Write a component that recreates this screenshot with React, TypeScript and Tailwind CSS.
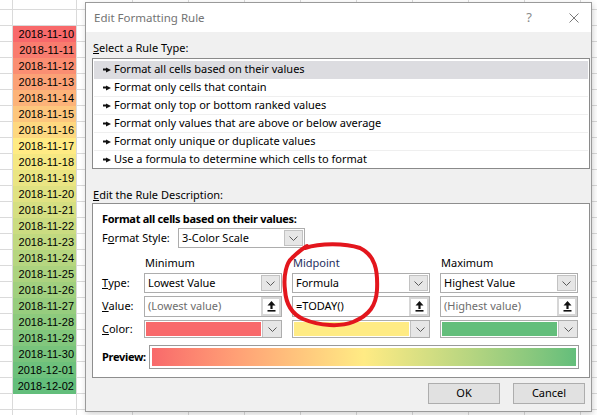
import React from 'react';

const DATES = [
  '2018-11-10', '2018-11-11', '2018-11-12', '2018-11-13', '2018-11-14', '2018-11-15',
  '2018-11-16', '2018-11-17', '2018-11-18', '2018-11-19', '2018-11-20', '2018-11-21',
  '2018-11-22', '2018-11-23', '2018-11-24', '2018-11-25', '2018-11-26', '2018-11-27',
  '2018-11-28', '2018-11-29', '2018-11-30', '2018-12-01', '2018-12-02',
];

const RED = [248, 105, 107];
const YELLOW = [255, 235, 132];
const GREEN = [99, 190, 123];
const MID = 7;

// 3-colour scale, same as the rule in the dialog (midpoint = today)
const scaleColor = (i: number) => {
  const last = DATES.length - 1;
  const [a, b, t] = i <= MID ? [RED, YELLOW, i / MID] : [YELLOW, GREEN, (i - MID) / (last - MID)];
  const c = a.map((v, k) => Math.round(v + (b[k] - v) * t));
  return `rgb(${c.join(',')})`;
};

const RULE_TYPES = [
  'Format all cells based on their values',
  'Format only cells that contain',
  'Format only top or bottom ranked values',
  'Format only values that are above or below average',
  'Format only unique or duplicate values',
  'Use a formula to determine which cells to format',
];

const EXTRA_COLS = Array.from({ length: 10 }, (_, i) => i);

const SheetRow = ({ first, date, color }: { first?: boolean; date?: string; color?: string }) => (
  <div className={`flex shrink-0 ${first ? 'h-[10px]' : 'h-[16px]'}`}>
    <div className="w-[13px] shrink-0 border-r border-b border-[#dadada]" />
    {date ? (
      <div
        className="w-[64px] shrink-0 border-r border-[#dadada] flex items-center justify-end pr-[2px] text-[11px] leading-none text-black font-['Liberation_Sans',sans-serif]"
        style={{ backgroundColor: color }}
      >
        {date}
      </div>
    ) : (
      <div className="w-[64px] shrink-0 border-r border-b border-[#dadada]" />
    )}
    {EXTRA_COLS.map((c) => (
      <div key={c} className="w-[56px] shrink-0 border-r border-b border-[#dadada]" />
    ))}
  </div>
);

const Sheet = () => (
  <div className="flex flex-col">
    <SheetRow first />
    <SheetRow />
    {DATES.map((d, i) => (
      <SheetRow key={d} date={d} color={scaleColor(i)} />
    ))}
    <SheetRow />
    <SheetRow />
  </div>
);

const Chevron = () => (
  <svg width="9" height="5" viewBox="0 0 9 5">
    <path d="M0.5 0.5 L4.5 4.5 L8.5 0.5" fill="none" stroke="#5a5a5a" strokeWidth="1" />
  </svg>
);

const DropButton = () => (
  <div className="w-[19px] shrink-0 my-[1px] mr-[1px] bg-[#e6e6e6] border border-[#c2c2c2] flex items-center justify-center">
    <Chevron />
  </div>
);

const UpArrow = () => (
  <svg width="9" height="11" viewBox="0 0 9 11">
    <polygon points="4.5,0 8.5,4.5 5.6,4.5 5.6,8 3.4,8 3.4,4.5 0.5,4.5" fill="#111" />
    <rect x="0.5" y="9" width="8" height="1.6" fill="#111" />
  </svg>
);

const Combo = ({ text, className = '' }: { text: string; className?: string }) => (
  <div className={`flex h-[20px] border border-[#adadad] bg-white ${className}`}>
    <div className="flex-1 flex items-center pl-[3px] text-black">{text}</div>
    <DropButton />
  </div>
);

const ValueBox = ({ text, muted }: { text: string; muted?: boolean }) => (
  <div className="flex h-[21px] border border-[#adadad] bg-white">
    <div className={`flex-1 flex items-center pl-[3px] ${muted ? 'text-[#6d6d6d]' : 'text-black'}`}>{text}</div>
    <div className="w-[20px] shrink-0 bg-[#d6d6d6] p-[2px]">
      <div className="w-full h-full bg-white flex items-center justify-center">
        <UpArrow />
      </div>
    </div>
  </div>
);

const ColorBox = ({ swatch }: { swatch: string }) => (
  <div className="flex h-[18px] border border-[#adadad] bg-white">
    <div className="flex-1 p-[1px]">
      <div className={`h-full ${swatch}`} />
    </div>
    <div className="w-[19px] shrink-0 bg-[#e6e6e6] border-l border-[#c2c2c2] flex items-center justify-center">
      <Chevron />
    </div>
  </div>
);

const Arrow = () => (
  <svg width="8" height="6" viewBox="0 0 8 6" className="shrink-0">
    <rect x="0" y="1.5" width="4" height="2" fill="#111" />
    <polygon points="3,0.5 8,3 3,5.5" fill="#111" />
  </svg>
);

const Dialog = () => (
  <div className="absolute left-[85px] top-[2px] w-[507px] h-[410px] border border-[#9a9a9a] bg-[#f0f0f0] flex flex-col shadow-[1px_2px_6px_rgba(0,0,0,0.18)] font-['Noto_Sans',sans-serif] text-[11px] text-black">
    {/* Title bar */}
    <div className="h-[29px] shrink-0 bg-white flex items-center pl-[8px] pr-[12px]">
      <span className="text-[11.5px] text-[#737373]">Edit Formatting Rule</span>
      <span className="flex-1" />
      <span className="text-[13px] text-[#8a8a8a] leading-none">?</span>
      <svg width="10" height="10" viewBox="0 0 10 10" className="ml-[37px]">
        <path d="M0.5 0.5 L9.5 9.5 M9.5 0.5 L0.5 9.5" stroke="#7a7a7a" strokeWidth="1" />
      </svg>
    </div>

    <div className="flex flex-col pl-[6px] pr-[1px]">
      <div className="pt-[8px] leading-[15px] pl-[1px]">
        <u>S</u>elect a Rule Type:
      </div>
      <div className="mt-[3px] w-[498px] h-[111px] border border-[#8a8a8a] bg-white pt-[2px] px-[1px] overflow-hidden">
        {RULE_TYPES.map((r, i) => (
          <div
            key={r}
            className={`h-[18px] shrink-0 flex items-center gap-[3px] pl-[9px] border-b ${
              i === 0 ? 'bg-[#dcdce0] border-[#dcdce0]' : 'border-[#efefef]'
            }`}
          >
            <Arrow />
            <span>{r}</span>
          </div>
        ))}
      </div>

      <div className="mt-[18px] leading-[15px] pl-[1px]">
        <u>E</u>dit the Rule Description:
      </div>
      <div className="mt-[1px] w-[498px] h-[175px] border border-[#8e8e8e] bg-white pl-[9px] pt-[7px]">
        <div className="leading-[15px] font-bold tracking-[-0.3px]">Format all cells based on their values:</div>
        <div className="mt-[2px] flex items-center">
          <div className="w-[76px]">
            F<u>o</u>rmat Style:
          </div>
          <Combo text="3-Color Scale" className="w-[127px]" />
        </div>

        <div className="mt-[7px] grid grid-cols-[32px_138px_138px_138px] grid-rows-[15px_20px_21px_18px] gap-x-[10px] gap-y-[3px]">
          <div />
          <div className="leading-[15px] pl-[1px]">Minimum</div>
          <div className="leading-[15px] pl-[1px] text-[#1f2f5e]">Midpoint</div>
          <div className="leading-[15px] pl-[1px]">Maximum</div>

          <div className="flex items-center">
            <u>T</u>ype:
          </div>
          <Combo text="Lowest Value" />
          <Combo text="Formula" />
          <Combo text="Highest Value" />

          <div className="flex items-center">
            <u>V</u>alue:
          </div>
          <ValueBox text="(Lowest value)" muted />
          <ValueBox text="=TODAY()" />
          <ValueBox text="(Highest value)" muted />

          <div className="flex items-center">
            <u>C</u>olor:
          </div>
          <ColorBox swatch="bg-[#f8696b]" />
          <ColorBox swatch="bg-[#ffeb84]" />
          <ColorBox swatch="bg-[#63be7b]" />
        </div>

        <div className="mt-[7px] flex items-center">
          <div className="w-[47px] font-bold tracking-[-0.3px]">Preview:</div>
          <div className="w-[430px] h-[24px] border border-[#9a9a9a] p-[2px] bg-white">
            <div className="h-full bg-linear-to-r from-[#f8696b] via-[#ffeb84] to-[#63be7b]" />
          </div>
        </div>
      </div>

      <div className="mt-[5px] flex justify-end gap-[13px] pr-[5px]">
        <button className="w-[72px] h-[21px] bg-[#e1e1e1] border border-[#adadad] text-[11px] text-black">OK</button>
        <button className="w-[72px] h-[21px] bg-[#e1e1e1] border border-[#adadad] text-[11px] text-black">Cancel</button>
      </div>
    </div>
  </div>
);

export default function App() {
  return (
    <div className="relative w-[597px] h-[415px] overflow-hidden bg-white">
      <Sheet />
      <Dialog />
      {/* hand-drawn highlight around the midpoint column */}
      <svg className="absolute inset-0 pointer-events-none" width="597" height="415" viewBox="0 0 597 415">
        <path
          d="M305 248 C320 243, 345 243, 360 248 C375 255, 378 270, 377 290 C376 305, 370 315, 353 322 C340 327, 320 326, 303 319 C292 314, 286 305, 285 290 C283 275, 287 262, 292 258 C296 254, 300 250, 307 246"
          fill="none"
          stroke="#e3161d"
          strokeWidth="4"
          strokeLinecap="round"
          strokeLinejoin="round"
        />
      </svg>
    </div>
  );
}
